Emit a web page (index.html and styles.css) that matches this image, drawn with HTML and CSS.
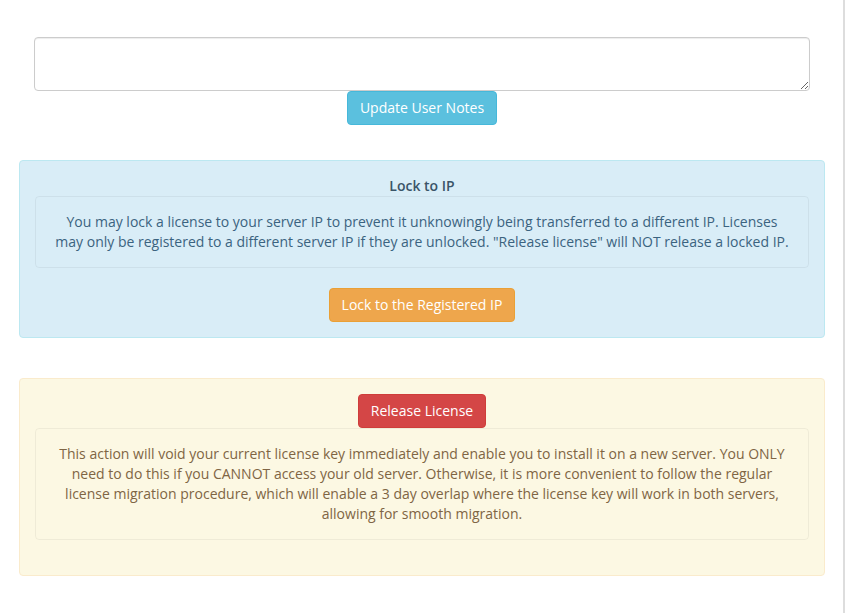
FILE: index.html
```html
<!DOCTYPE html>
<html lang="en">
  <head>
    <meta charset="UTF-8" />
    <meta name="viewport" content="width=device-width, initial-scale=1.0" />
    <title>License Management</title>
    <link rel="stylesheet" href="styles.css">
  </head>
  <body>
    <div class="page">
      <div class="notes">
        <textarea class="notes-input" id="userNotes"></textarea>
        <button class="btn btn-info">Update User Notes</button>
      </div>

      <div class="alert alert-info">
        <div class="alert-title">Lock to IP</div>
        <div class="well">
          You may lock a license to your server IP to prevent it unknowingly being transferred to a different IP. Licenses
          may only be registered to a different server IP if they are unlocked. "Release license" will NOT release a locked IP.
        </div>
        <button class="btn btn-warning">Lock to the Registered IP</button>
      </div>

      <div class="alert alert-warning">
        <button class="btn btn-danger">Release License</button>
        <div class="well">
          This action will void your current license key immediately and enable you to install it on a new server. You ONLY
          need to do this if you CANNOT access your old server. Otherwise, it is more convenient to follow the regular
          license migration procedure, which will enable a 3 day overlap where the license key will work in both servers,
          allowing for smooth migration.
        </div>
      </div>
    </div>
  </body>
</html>
```

FILE: styles.css
```css
body {
  margin: 0;
  font-family: "Open Sans", Arial, sans-serif;
  font-size: 14px;
  line-height: 20px;
  color: #333;
  background: #fff;
}

.page {
  width: 845px;
  min-height: 613px;
  border-right: 2px solid #ddd;
  padding: 37px 0 0 19px;
  box-sizing: border-box;
}

.notes {
  width: 776px;
  margin-left: 15px;
  text-align: center;
  margin-bottom: 35px;
}

.notes-input {
  display: block;
  width: 100%;
  height: 54px;
  box-sizing: border-box;
  margin: 0;
  padding: 6px 12px;
  border: 1px solid #ccc;
  border-radius: 4px;
  box-shadow: inset 0 1px 1px rgba(0, 0, 0, 0.075);
  font-family: inherit;
  font-size: 14px;
  resize: vertical;
}

.btn {
  display: inline-block;
  padding: 6px 12px;
  font-family: inherit;
  font-size: 14px;
  line-height: 20px;
  border: 1px solid transparent;
  border-radius: 4px;
  color: #fff;
  cursor: pointer;
}

.btn-info {
  background: #5bc0de;
  border-color: #46b8da;
}

.btn-warning {
  background: #eea64c;
  border-color: #eaa036;
}

.btn-danger {
  background: #d44646;
  border-color: #cf3d3a;
}

.alert {
  width: 806px;
  box-sizing: border-box;
  padding: 15px;
  border: 1px solid transparent;
  border-radius: 4px;
  text-align: center;
  margin-bottom: 40px;
}

.alert-info {
  background: #d9edf7;
  border-color: #bce8f1;
  color: #3b6380;
}

.alert-warning {
  background: #fcf8e3;
  border-color: #faebcc;
  color: #7f6544;
}

.alert-title {
  font-weight: 600;
  color: #3a5468;
}

.well {
  padding: 15px;
  margin-bottom: 20px;
  border: 1px solid rgba(0, 0, 0, 0.05);
  border-radius: 4px;
}
```
